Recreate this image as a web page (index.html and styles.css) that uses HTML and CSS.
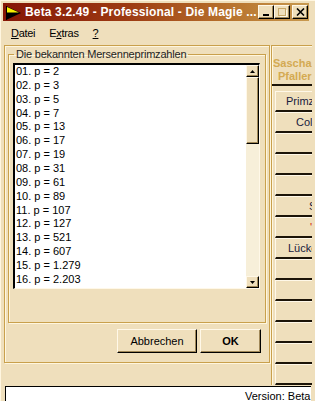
FILE: index.html
```html
<!DOCTYPE html>
<html lang="de">
<head>
<meta charset="utf-8">
<title>Beta 3.2.49</title>
<link rel="stylesheet" href="styles.css">
</head>
<body>
<div class="window">
  <div class="titlebar">
    <svg class="app-icon" width="16" height="15" viewBox="0 0 16 15">
      <polygon points="1,1 16,8 1,15" fill="#000"/>
      <polygon points="2,2 14,7.5 2,7.5" fill="#f8f000"/>
      <rect x="1" y="1" width="1" height="14" fill="#000"/>
    </svg>
    <span class="title">Beta 3.2.49 - Professional - Die Magie ...</span>
    <span class="cbtn"><svg width="8" height="8" viewBox="0 0 8 8"><rect x="1" y="6" width="6" height="2" fill="#000"/></svg></span>
    <span class="cbtn"><svg width="10" height="10" viewBox="0 0 10 10"><rect x="1.5" y="1.5" width="7" height="7" fill="none" stroke="#c8a868"/><rect x="1" y="1" width="8" height="1" fill="#c8a868"/><path d="M3 9.5H9.5V3" fill="none" stroke="#fff8e8"/></svg></span>
    <span class="cbtn close"><svg width="9" height="8" viewBox="0 0 9 8"><path d="M1 0.5L8 7.5M8 0.5L1 7.5" stroke="#000" stroke-width="1.6"/></svg></span>
  </div>
  <div class="menubar">
    <span class="menu"><u>D</u>atei</span>
    <span class="menu">E<u>x</u>tras</span>
    <span class="menu"><u>?</u></span>
  </div>
  <div class="main">
    <div class="outer-group">
      <fieldset class="list-group">
        <legend>Die bekannten Mersenneprimzahlen</legend>
        <div class="listbox">
          <ul class="items">
            <li>01. p = 2</li>
            <li>02. p = 3</li>
            <li>03. p = 5</li>
            <li>04. p = 7</li>
            <li>05. p = 13</li>
            <li>06. p = 17</li>
            <li>07. p = 19</li>
            <li>08. p = 31</li>
            <li>09. p = 61</li>
            <li>10. p = 89</li>
            <li>11. p = 107</li>
            <li>12. p = 127</li>
            <li>13. p = 521</li>
            <li>14. p = 607</li>
            <li>15. p = 1.279</li>
            <li>16. p = 2.203</li>
          </ul>
          <div class="scrollbar">
            <div class="sb-btn"><svg width="5" height="3" viewBox="0 0 5 3"><polygon points="2.5,0 5,3 0,3" fill="#000"/></svg></div>
            <div class="thumb"></div>
            <div class="track"></div>
            <div class="sb-btn"><svg width="5" height="3" viewBox="0 0 5 3"><polygon points="0,0 5,0 2.5,3" fill="#000"/></svg></div>
          </div>
        </div>
      </fieldset>
      <div class="actions">
        <button class="btn cancel">Abbrechen</button>
        <button class="btn ok">OK</button>
      </div>
    </div>
    <div class="side">
      <div class="brand"><span class="brand-a">Sascha</span><span class="brand-b">Pfaller</span></div>
      <div class="sbtn first"><span class="t-primz">Primzahlen</span></div>
      <div class="sbtn"><span class="t-col">Collatz</span></div>
      <div class="sbtn"></div>
      <div class="sbtn"></div>
      <div class="sbtn"></div>
      <div class="sbtn"><span class="t-s">Sieb</span></div>
      <div class="sbtn"><span class="t-red">'</span></div>
      <div class="sbtn"><span class="t-luck">Lücken</span></div>
      <div class="sbtn"></div>
      <div class="sbtn"></div>
      <div class="sbtn"></div>
      <div class="sbtn"></div>
      <div class="sbtn"></div>
      <div class="sbtn"></div>
    </div>
  </div>
  <div class="statusbar"><span>Version: Beta</span></div>
</div>
</body>
</html>
```
FILE: styles.css
```css
* { box-sizing: border-box; }
html, body { margin: 0; padding: 0; }
body {
  width: 315px;
  height: 401px;
  overflow: hidden;
  background: #efdfbc;
  font-family: "Liberation Sans", Arial, sans-serif;
  font-size: 11px;
  color: #000;
}
.window {
  width: 315px;
  height: 401px;
  padding: 2px 0 0 2px;
  border-top: 1px solid #fff6e0;
  border-left: 1px solid #fff6e0;
  display: flex;
  flex-direction: column;
  overflow: hidden;
}
.titlebar {
  flex: none;
  width: 306px;
  height: 18px;
  display: flex;
  align-items: center;
  padding: 0 1px 0 2px;
  background: linear-gradient(90deg, #861606 0%, #9c3a12 40%, #b8742e 75%, #c89a50 100%);
}
.app-icon { flex: none; display: block; }
.title {
  flex: 1;
  margin-left: 4px;
  color: #fff;
  font-weight: bold;
  font-size: 12px;
  letter-spacing: 0.15px;
  white-space: nowrap;
  overflow: hidden;
  line-height: 14px;
}
.cbtn {
  flex: none;
  width: 16px;
  height: 14px;
  display: flex;
  align-items: center;
  justify-content: center;
  background: #efdfbc;
  border: 1px solid;
  border-color: #fff8e8 #000 #000 #fff8e8;
  box-shadow: inset -1px -1px 0 #a08858;
}
.cbtn svg { display: block; }
.cbtn.close { margin-left: 2px; }
.menubar {
  flex: none;
  height: 24px;
  display: flex;
  align-items: center;
  padding-left: 1px;
}
.menu { padding: 0 7px; line-height: 13px; letter-spacing: -0.3px; }
.menu u { text-underline-offset: 1px; }
.main {
  flex: none;
  height: 340px;
  display: flex;
}
.outer-group {
  flex: none;
  width: 266px;
  height: 318px;
  margin-left: 1px;
  border: 1px solid #c9a04c;
  box-shadow: inset 1px 1px 0 #fff6de, 1px 1px 0 #fff6de;
  padding: 1px 3px 0 3px;
  display: flex;
  flex-direction: column;
}
.list-group {
  margin: 0;
  min-width: 0;
  border: 1px solid #c9a04c;
  box-shadow: inset 1px 1px 0 #fff6de, 1px 1px 0 #fff6de;
  padding: 2px 5px 33px 4px;
}
.list-group legend {
  padding: 0 2px;
  margin-left: 1px;
  line-height: 14px;
  color: #1e1e1e;
  letter-spacing: -0.2px;
}
.listbox {
  height: 226px;
  display: flex;
  background: #fff;
  border-top: 2px solid #000;
  border-left: 2px solid #000;
  border-right: 1px solid #fff8e8;
  border-bottom: 1px solid #fff8e8;
}
.items {
  flex: 1;
  list-style: none;
  margin: 0;
  padding: 0 0 0 1px;
  overflow: hidden;
}
.items li { line-height: 13.87px; height: 13.87px; white-space: nowrap; }
.scrollbar {
  flex: none;
  width: 13px;
  display: flex;
  flex-direction: column;
  background: #f7efd9;
}
.sb-btn, .thumb {
  background: #efdfbc;
  border: 1px solid;
  border-color: #fff8e8 #000 #000 #fff8e8;
  box-shadow: inset -1px -1px 0 #a08858;
}
.sb-btn {
  height: 12px;
  display: flex;
  align-items: center;
  justify-content: center;
}
.sb-btn svg { display: block; }
.thumb { height: 67px; }
.track { flex: 1; }
.actions {
  display: flex;
  justify-content: flex-end;
  gap: 3px;
  margin: 6px 5px 0 0;
}
.btn {
  height: 24px;
  padding: 0;
  font-family: "Liberation Sans", Arial, sans-serif;
  font-size: 11px;
  color: #000;
  background: #efdfbc;
  border: 1px solid;
  border-color: #fff8e8 #000 #000 #fff8e8;
  box-shadow: inset -1px -1px 0 #a08858;
}
.btn.cancel { width: 80px; }
.btn.ok { width: 61px; font-weight: bold; }
.side {
  flex: none;
  width: 41px;
  margin-left: 1px;
  border-top: 1px solid #c9a04c;
  border-left: 1px solid #c9a04c;
  box-shadow: inset 1px 1px 0 #fff6de;
  overflow: hidden;
  display: flex;
  flex-direction: column;
}
.brand {
  flex: none;
  height: 40px;
  padding: 11px 0 1px 0;
  border-bottom: 2px solid #1c1408;
  color: #d4aa52;
  font-weight: bold;
  line-height: 13px;
  white-space: nowrap;
}
.brand-a, .brand-b { display: block; }
.brand-a { padding-left: 1px; }
.brand-b { padding-left: 6px; }
.sbtn {
  flex: none;
  height: 21px;
  margin-left: 3px;
  display: flex;
  align-items: center;
  border-top: 1px solid #fff8e8;
  border-left: 1px solid #fff8e8;
  border-bottom: 2px solid #1c1408;
  white-space: nowrap;
  color: #18203c;
  line-height: 13px;
}
.sbtn.first { margin-top: 5px; }
.t-primz { padding-left: 10px; }
.t-col { padding-left: 20px; }
.t-s { padding-left: 33px; }
.t-red { padding-left: 34px; color: #d02000; }
.t-luck { padding-left: 12px; }
.statusbar {
  flex: none;
  width: 306px;
  height: 16px;
  margin: 1px 0 0 2px;
  background: #fff;
  border-top: 1px solid #000;
  border-left: 1px solid #000;
  padding: 3px 0 0 239px;
  line-height: 13px;
  white-space: nowrap;
  overflow: hidden;
}
```
